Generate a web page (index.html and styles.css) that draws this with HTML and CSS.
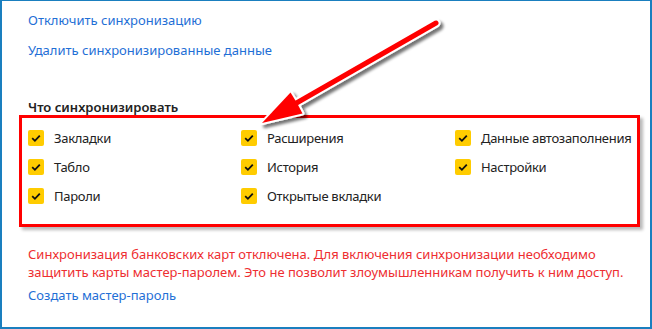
FILE: index.html
```html
<!DOCTYPE html>
<html lang="ru">
<head>
<meta charset="utf-8">
<link rel="stylesheet" href="styles.css">
</head>
<body>
<div class="frame">
  <div class="links">
    <a class="link">Отключить синхронизацию</a>
    <a class="link">Удалить синхронизированные данные</a>
  </div>
  <div class="heading">Что синхронизировать</div>
  <div class="box">
    <div class="item"><span class="cb"><svg viewBox="0 0 16 16"><path d="M4.2 8.2 L6.9 10.8 L11.8 5.6" /></svg></span>Закладки</div>
    <div class="item"><span class="cb"><svg viewBox="0 0 16 16"><path d="M4.2 8.2 L6.9 10.8 L11.8 5.6" /></svg></span>Расширения</div>
    <div class="item"><span class="cb"><svg viewBox="0 0 16 16"><path d="M4.2 8.2 L6.9 10.8 L11.8 5.6" /></svg></span>Данные автозаполнения</div>
    <div class="item"><span class="cb"><svg viewBox="0 0 16 16"><path d="M4.2 8.2 L6.9 10.8 L11.8 5.6" /></svg></span>Табло</div>
    <div class="item"><span class="cb"><svg viewBox="0 0 16 16"><path d="M4.2 8.2 L6.9 10.8 L11.8 5.6" /></svg></span>История</div>
    <div class="item"><span class="cb"><svg viewBox="0 0 16 16"><path d="M4.2 8.2 L6.9 10.8 L11.8 5.6" /></svg></span>Настройки</div>
    <div class="item"><span class="cb"><svg viewBox="0 0 16 16"><path d="M4.2 8.2 L6.9 10.8 L11.8 5.6" /></svg></span>Пароли</div>
    <div class="item"><span class="cb"><svg viewBox="0 0 16 16"><path d="M4.2 8.2 L6.9 10.8 L11.8 5.6" /></svg></span>Открытые вкладки</div>
  </div>
  <p class="warn">Синхронизация банковских карт отключена. Для включения синхронизации необходимо защитить карты мастер-паролем. Это не позволит злоумышленникам получить к ним доступ.</p>
  <a class="link create">Создать мастер-пароль</a>

  <svg class="arrow" width="652" height="329" viewBox="0 0 652 329">
    <defs>
      <filter id="sh" x="-20%" y="-20%" width="140%" height="140%">
        <feGaussianBlur in="SourceAlpha" stdDeviation="1.6"/>
        <feOffset dx="2.5" dy="3" result="b"/>
        <feComponentTransfer><feFuncA type="linear" slope="0.55"/></feComponentTransfer>
        <feMerge><feMergeNode/><feMergeNode in="SourceGraphic"/></feMerge>
      </filter>
    </defs>
    <g filter="url(#sh)">
      <line x1="436" y1="23" x2="293" y2="105" stroke="#fff" stroke-width="9" stroke-linecap="round"/>
      <polygon points="262,123 290.5,92.5 297,103 302.5,113.5" fill="#fff" stroke="#fff" stroke-width="4" stroke-linejoin="round"/>
      <line x1="436" y1="23" x2="293" y2="105" stroke="#ff0000" stroke-width="5" stroke-linecap="round"/>
      <polygon points="262,123 290.5,92.5 297,103 302.5,113.5" fill="#ff0000"/>
    </g>
  </svg>
</div>
</body>
</html>
```
FILE: styles.css
```css
html, body {
  margin: 0;
  padding: 0;
  background: #fff;
}
.frame {
  position: relative;
  width: 652px;
  height: 329px;
  box-sizing: border-box;
  border: 2px solid #1a7fbf;
  border-top: 1px solid #1a7fbf;
  padding: 0 0 0 26px;
  font-family: "Noto Sans", "Open Sans", sans-serif;
  font-size: 13px;
  color: #222;
  overflow: hidden;
}
.links {
  display: flex;
  flex-direction: column;
  padding-top: 10px;
  gap: 12px;
}
.link {
  display: block;
  color: #1f6fd6;
  line-height: 18px;
}
.heading {
  margin-top: 39px;
  font-weight: 600;
  line-height: 18px;
}
.box {
  margin: -1px 0 0 -9px;
  width: 621px;
  height: 112px;
  box-sizing: border-box;
  border: 3px solid #ff0000;
  box-shadow: 3px 3px 3px rgba(0,0,0,0.28);
  padding: 5px 0 0 6px;
  display: grid;
  grid-template-columns: 213px 214px 1fr;
  grid-auto-rows: 29px;
  align-items: center;
}
.item {
  display: flex;
  align-items: center;
  line-height: 18px;
  white-space: nowrap;
  letter-spacing: -0.3px;
}
.cb {
  width: 16px;
  height: 16px;
  border-radius: 2px;
  background: #ffcc00;
  margin-right: 10px;
  flex: none;
  display: flex;
}
.cb svg {
  width: 16px;
  height: 16px;
  fill: none;
  stroke: #111;
  stroke-width: 1.8;
}
.warn {
  margin: 18px 0 0 0;
  color: #ee2e31;
  line-height: 18px;
  width: 600px;
}
.create {
  margin-top: 5px;
}
.arrow {
  position: absolute;
  left: -2px;
  top: -1px;
  pointer-events: none;
}
```
